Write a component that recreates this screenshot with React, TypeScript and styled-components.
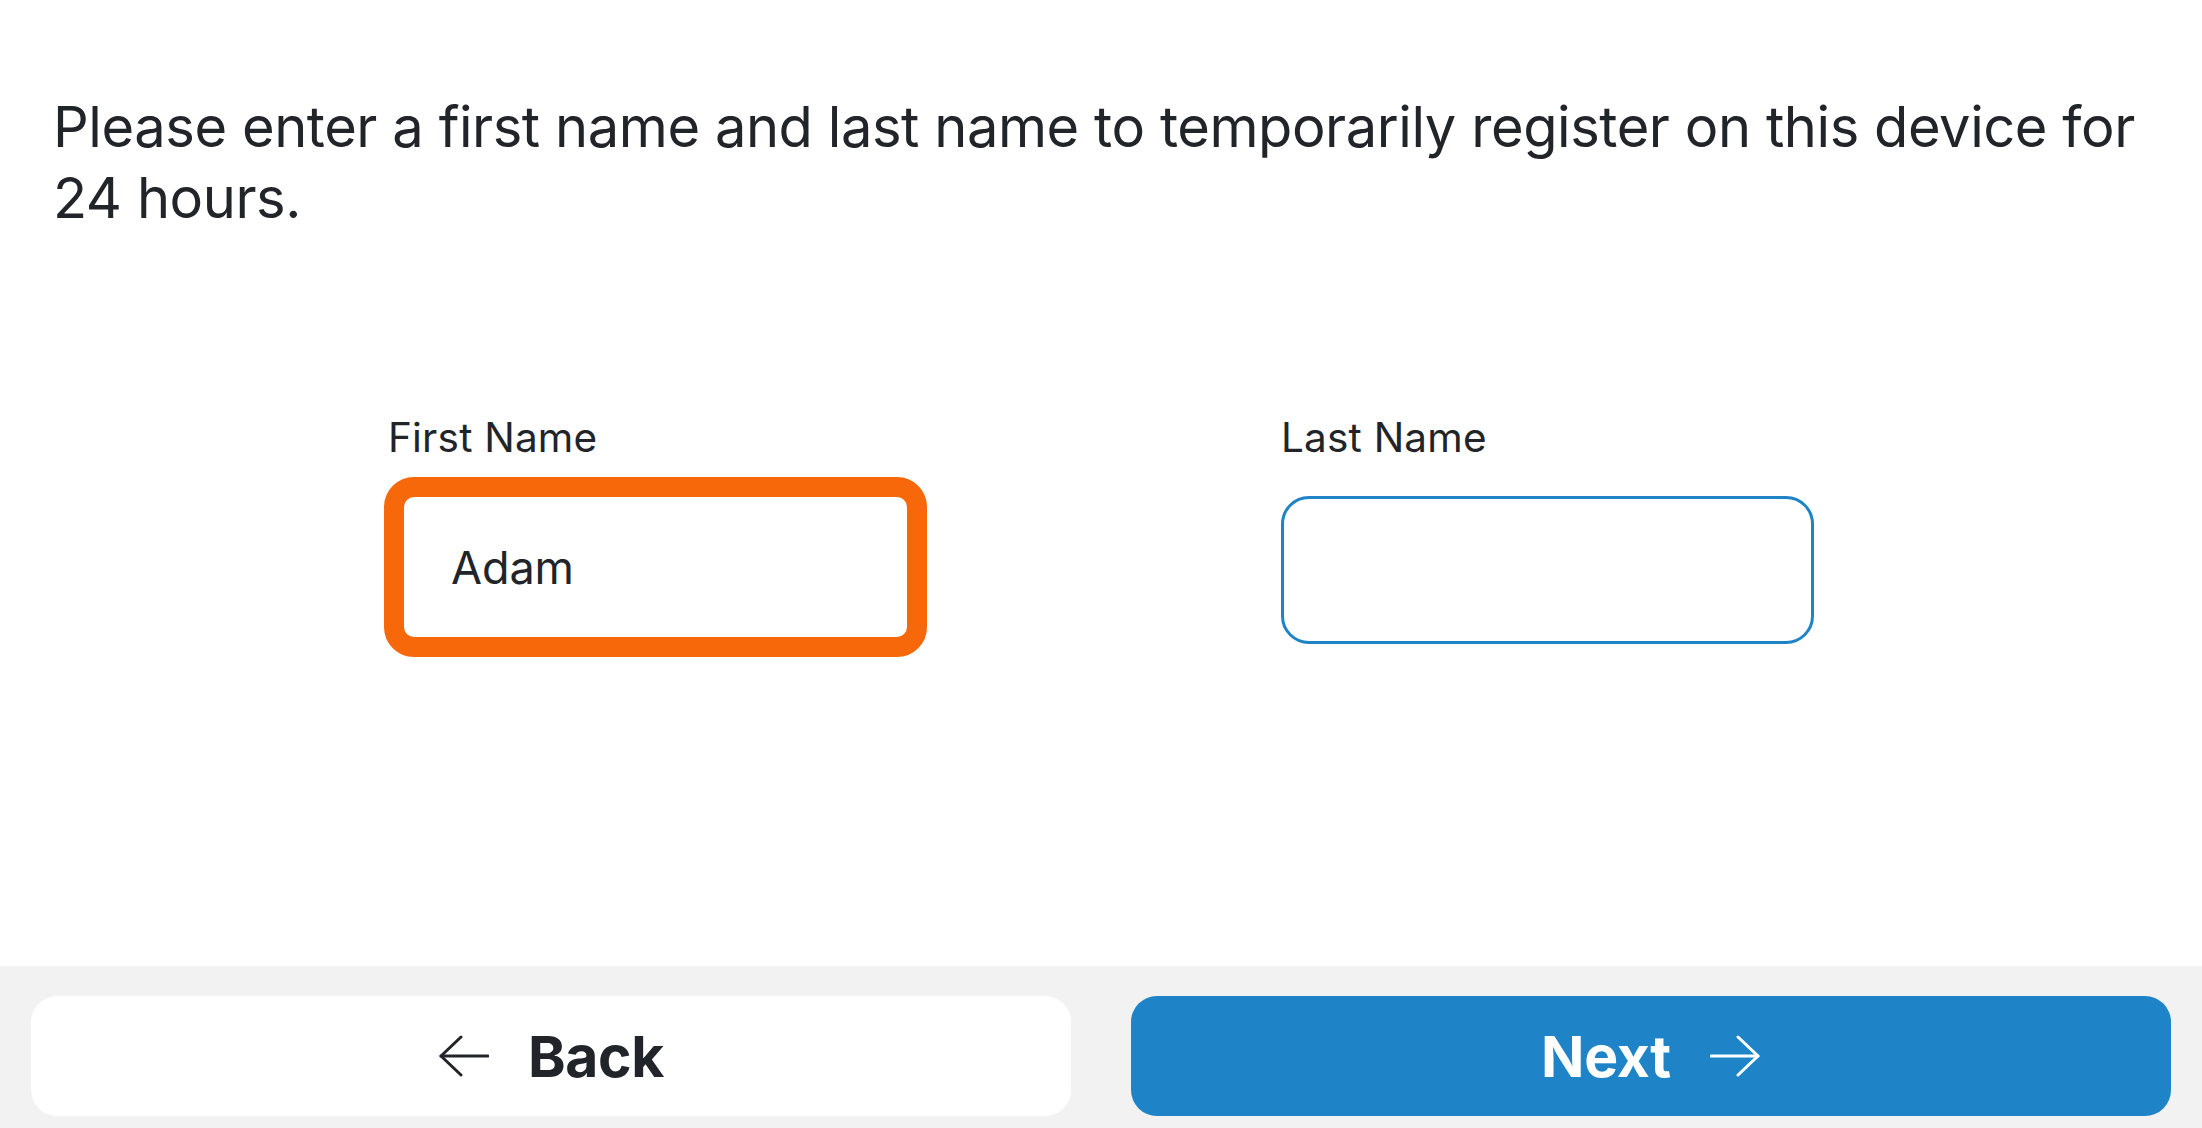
import React from "react";
import styled, { createGlobalStyle } from "styled-components";

const GlobalStyle = createGlobalStyle`
  html, body, #root { height: 100%; }
  body {
    margin: 0;
    background: #ffffff;
    font-family: Inter, "Noto Sans", sans-serif;
    color: #212428;
  }
  * { box-sizing: border-box; }
`;

const Page = styled.div`
  height: 100vh;
  display: flex;
  flex-direction: column;
`;

const Main = styled.main`
  flex: 1;
  padding: 92px 53px 0;
`;

const Intro = styled.p`
  margin: 0;
  font-size: 56px;
  line-height: 71px;
  font-weight: 400;
  letter-spacing: -0.43px;
`;

const Fields = styled.div`
  margin-top: 180px;
  display: grid;
  grid-template-columns: 533px 533px;
  column-gap: 360px;
  justify-content: center;
`;

const Field = styled.div`
  display: flex;
  flex-direction: column;
  align-items: flex-start;
`;

const Label = styled.label`
  font-size: 40.5px;
  line-height: 48px;
  letter-spacing: 0.2px;
`;

const InputBox = styled.div<{ $focused?: boolean }>`
  display: flex;
  align-items: center;
  background: #ffffff;
  ${({ $focused }) =>
    $focused
      ? `
    width: 543px;
    height: 180px;
    margin: 15px 0 0 -4px;
    border: 20px solid #f7680b;
    border-radius: 30px;
    padding-left: 47px;
  `
      : `
    width: 533px;
    height: 148px;
    margin-top: 34px;
    border: 3px solid #1e84c7;
    border-radius: 28px;
    padding-left: 40px;
  `}
`;

const InputText = styled.span`
  font-size: 45px;
  letter-spacing: -0.1px;
  color: #212428;
`;

const Footer = styled.footer`
  background: #f2f2f2;
  height: 162px;
  padding: 30px 31px 12px;
  display: grid;
  grid-template-columns: 1fr 1fr;
  column-gap: 60px;
`;

const ActionButton = styled.button<{ $primary?: boolean }>`
  height: 120px;
  border: none;
  border-radius: 26px;
  display: flex;
  align-items: center;
  justify-content: center;
  gap: 39px;
  font-family: Inter, "Noto Sans", sans-serif;
  font-size: 57px;
  font-weight: 700;
  letter-spacing: -0.3px;
  background: ${({ $primary }) => ($primary ? "#1e84c7" : "#ffffff")};
  color: ${({ $primary }) => ($primary ? "#ffffff" : "#212428")};
  cursor: pointer;
`;

const ArrowSvg = styled.svg`
  width: 51px;
  height: 42px;
  flex: none;
`;

const Arrow = ({ dir }: { dir: "left" | "right" }) => (
  <ArrowSvg viewBox="0 0 51 42" fill="none">
    {dir === "left" ? (
      <>
        <path d="M3 21 H50" stroke="currentColor" strokeWidth="3" strokeLinecap="round" />
        <path d="M23 2 L3 21 L23 40" stroke="currentColor" strokeWidth="3" strokeLinecap="round" strokeLinejoin="round" />
      </>
    ) : (
      <>
        <path d="M1 21 H48" stroke="currentColor" strokeWidth="3" strokeLinecap="round" />
        <path d="M28 2 L48 21 L28 40" stroke="currentColor" strokeWidth="3" strokeLinecap="round" strokeLinejoin="round" />
      </>
    )}
  </ArrowSvg>
);

export default function App() {
  return (
    <>
      <GlobalStyle />
      <Page>
        <Main>
          <Intro>
            Please enter a first name and last name to temporarily register on this device for 24 hours.
          </Intro>
          <Fields>
            <Field>
              <Label>First Name</Label>
              <InputBox $focused>
                <InputText>Adam</InputText>
              </InputBox>
            </Field>
            <Field>
              <Label>Last Name</Label>
              <InputBox />
            </Field>
          </Fields>
        </Main>
        <Footer>
          <ActionButton>
            <Arrow dir="left" />
            <span>Back</span>
          </ActionButton>
          <ActionButton $primary>
            <span>Next</span>
            <Arrow dir="right" />
          </ActionButton>
        </Footer>
      </Page>
    </>
  );
}
